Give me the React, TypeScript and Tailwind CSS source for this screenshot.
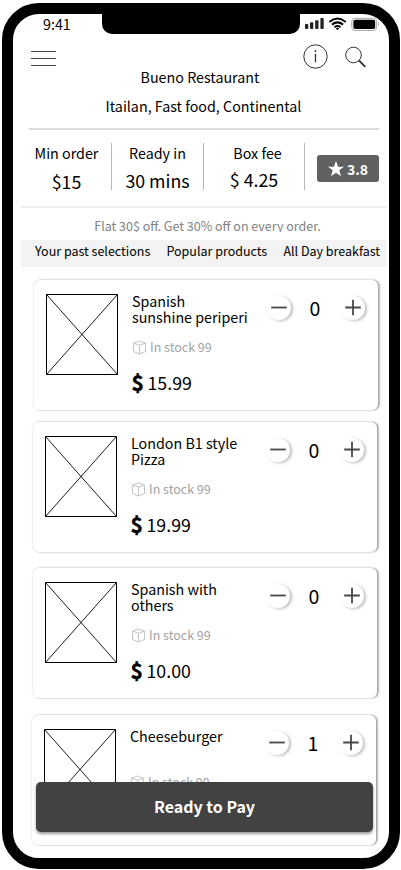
type Product = { name: string; qty: number; price: string; box: string };

const products: Product[] = [
  { name: 'Spanish\nsunshine periperi', qty: 0, price: '15.99', box: 'ml-[34px] mb-[12px]' },
  { name: 'London B1 style\nPizza', qty: 0, price: '19.99', box: 'ml-[33px] mb-[16px]' },
  { name: 'Spanish with\nothers', qty: 0, price: '10.00', box: 'ml-[33px] mb-[17px]' },
  { name: 'Cheeseburger', qty: 1, price: '12.00', box: 'ml-[32px]' },
];

function BoxIcon() {
  return (
    <svg width="14" height="15" viewBox="0 0 14 15" fill="none" stroke="#bdbdbd" strokeWidth="0.9" strokeLinejoin="round" className="shrink-0">
      <path d="M7.5 1 13.5 3.2V11.5L7.5 14 1.5 11.5V3.2ZM1.5 3.2 7.5 5.2 13.5 3.2M7.5 5.2V14" />
    </svg>
  );
}

function RoundButton({ plus }: { plus?: boolean }) {
  return (
    <button className="flex size-6 items-center justify-center rounded-full bg-white shadow-[2px_1px_3px_rgba(0,0,0,0.25)]">
      <svg width="24" height="24" viewBox="0 0 24 24" stroke="#484848" strokeWidth="1.8">
        <path d={plus ? 'M4.2 11.5H19.8M12 3.8V19.3' : 'M4.2 11.5H19.8'} />
      </svg>
    </button>
  );
}

function ProductCard({ product }: { product: Product }) {
  return (
    <article className={`flex h-[130px] w-[344px] shrink-0 rounded-[6px] bg-white shadow-[2px_0_2px_rgba(0,0,0,0.22),0.5px_0_2px_rgba(0,0,0,0.22)] ${product.box}`}>
      <svg width="72" height="81" viewBox="0 0 72 81" fill="none" stroke="#000" className="mt-[14px] ml-[12px] shrink-0">
        <path d="M.5.5H71.5V80.5H.5Z" />
        <path d="M.5.5 71.5 80.5M71.5.5.5 80.5" strokeWidth="0.9" />
      </svg>
      <div className="ml-[14px] w-[134px] shrink-0 pt-[13px]">
        <h2 className="h-[32px] text-[14.3px] leading-[16px] whitespace-pre">{product.name}</h2>
        <div className="mt-[12px] flex h-[20px] items-center gap-[4px] text-[12.5px] leading-[20px] whitespace-nowrap text-[#a3a3a3]">
          <BoxIcon />
          <span>In stock 99</span>
        </div>
        <div className="mt-[13px] flex items-center gap-[4px] leading-[24px]">
          <span className="-ml-[0.5px] w-[12px] text-[21px] font-bold [-webkit-text-stroke:0.4px_#000]">$</span>
          <span className="text-[17.8px]">{product.price}</span>
        </div>
      </div>
      <div className="mt-[15px] ml-px flex h-[25px] w-[98px] shrink-0 items-center justify-between">
        <RoundButton />
        <span className="-ml-[2px] text-[19.5px] leading-[24px]">{product.qty}</span>
        <RoundButton plus />
      </div>
    </article>
  );
}

function Stat({ label, value, box }: { label: string; value: string; box: string }) {
  return (
    <div className={`flex h-[47px] shrink-0 flex-col items-center border-r border-[#b5b5b5] whitespace-nowrap ${box}`}>
      <span className="text-[14.3px] leading-[20px]">{label}</span>
      <span className="text-[17.8px] leading-[24px]">{value}</span>
    </div>
  );
}

function StatusIcons() {
  return (
    <svg width="76" height="16" viewBox="304 16 76 16" className="shrink-0">
      <g fill="#222">
        <rect x="305" y="24" width="3.3" height="5" rx="1" />
        <rect x="310" y="22.3" width="3.3" height="6.7" rx="1" />
        <rect x="315.2" y="20.3" width="3.3" height="8.7" rx="1" />
        <rect x="320.4" y="18" width="3.3" height="11" rx="1" />
      </g>
      <g fill="none" stroke="#000" strokeWidth="2">
        <path d="M329.3 21.9Q337.5 15.2 345.7 21.9" />
        <path d="M332 24.6Q337.5 20.2 343 24.6" />
        <path d="M334.5 27.2Q337.5 24.8 340.5 27.2" />
      </g>
      <path d="M335.9 28.4Q337.5 27.3 339.1 28.4L337.5 30.2Z" />
      <rect x="351.8" y="18.3" width="24.8" height="12.2" rx="3" fill="#fff" stroke="#a8a8a8" />
      <rect x="353.4" y="19.8" width="21.8" height="9.2" rx="1.8" />
      <path d="M378 22.6Q380 24.4 378 26.2Z" fill="#a8a8a8" />
    </svg>
  );
}

export default function App() {
  return (
    <div className="h-[870px] w-[401px] overflow-hidden bg-white pt-[3px] pl-[2px] font-['Noto_Sans_CJK_SC',sans-serif] text-black">
      <main className="relative flex h-[866px] w-[398px] flex-col overflow-hidden rounded-[37px] border-[11px] border-black bg-white">
        <div className="-mx-[13px] flex w-[402px] shrink-0 flex-col">
          <div className="flex h-[20px] items-start">
            <span className="ml-[43px] w-[59px] text-[14.3px] leading-[20px]">9:41</span>
            <div className="-mt-px mr-[4px] h-[21px] w-[198px] rounded-b-[10px] bg-black" />
            <div className="mt-[2px]"><StatusIcons /></div>
          </div>
          <header className="flex h-[34px] items-start">
            <svg width="26" height="18" viewBox="0 0 26 18" stroke="#444" className="mt-[16px] ml-[31px]">
              <path d="M0 1.5H25M0 8.5H25M0 15.5H25" />
            </svg>
            <svg width="26" height="26" viewBox="0 0 26 26" fill="none" stroke="#333" className="mt-[9px] ml-[246px] shrink-0">
              <circle cx="12.5" cy="13.5" r="11.7" />
              <path d="M12.5 10.8V19.2" strokeWidth="1.3" />
              <circle cx="12.5" cy="8" r=".9" fill="#333" stroke="none" />
            </svg>
            <svg width="22" height="24" viewBox="0 0 22 24" fill="none" stroke="#333" className="mt-[12px] ml-[16px] shrink-0">
              <circle cx="8.5" cy="9" r="7.8" />
              <path d="M14 14.5 20.3 20.8" strokeWidth="1.8" />
            </svg>
          </header>
          <h1 className="-mt-px -ml-[2px] text-center text-[14.3px] leading-[20px]">Bueno Restaurant</h1>
          <p className="mt-[9px] ml-[5px] text-center text-[14.3px] leading-[20px]">Itailan, Fast food, Continental</p>
          <div className="mt-[12px] ml-[29px] h-[2px] w-[350px] bg-[#dddddd]" />
          <section className="mt-[13px] flex h-[63px]">
            <Stat label="Min order" value="$15" box="ml-[22px] w-[90px] gap-[6px]" />
            <Stat label="Ready in" value="30 mins" box="w-[92px] gap-[5px]" />
            <Stat label="Box fee" value="$ 4.25" box="w-[101px] pl-[7px] gap-[4px] [&>span:last-child]:-ml-[7px]" />
            <div className="mt-[12px] ml-[12px] flex h-[27px] w-[62px] items-center justify-center gap-[3px] rounded-[3px] bg-[#616161] text-white">
              <svg width="16" height="16" viewBox="0 0 16 16" fill="currentColor">
                <path d="M8 0 10.1 5.7H15.9L11.3 9.3 13 15.2 8 11.8 3 15.2 4.7 9.3.1 5.7H5.9Z" />
              </svg>
              <span className="text-[14px] leading-[20px] font-bold">3.8</span>
            </div>
          </section>
          <div className="ml-[21px] h-[2px] w-[366px] bg-[#eeeeee]" />
          <p className="mt-[8px] ml-[13px] h-[16px] overflow-hidden text-center text-[12.5px] leading-[20px] text-[#828282]">Flat 30$ off. Get 30% off on every order.</p>
          <nav className="mt-[8px] ml-[21px] flex h-[27px] w-[366px] gap-[16.2px] bg-[#f3f3f3] pl-[14px] text-[12.5px] leading-[22px] whitespace-nowrap">
            <span>Your past selections</span>
            <span>Popular products</span>
            <span>All Day breakfast</span>
          </nav>
          <div className="mt-[13px] flex flex-col">
            {products.map((p) => (
              <ProductCard key={p.name} product={p} />
            ))}
          </div>
        </div>
        <button className="absolute bottom-[26px] left-[23px] h-[50px] w-[337px] rounded-[5px] bg-[#424242] pb-[2px] text-[16px] font-bold text-white shadow-[0_2px_3px_rgba(0,0,0,0.4)]">
          Ready to Pay
        </button>
      </main>
    </div>
  );
}
